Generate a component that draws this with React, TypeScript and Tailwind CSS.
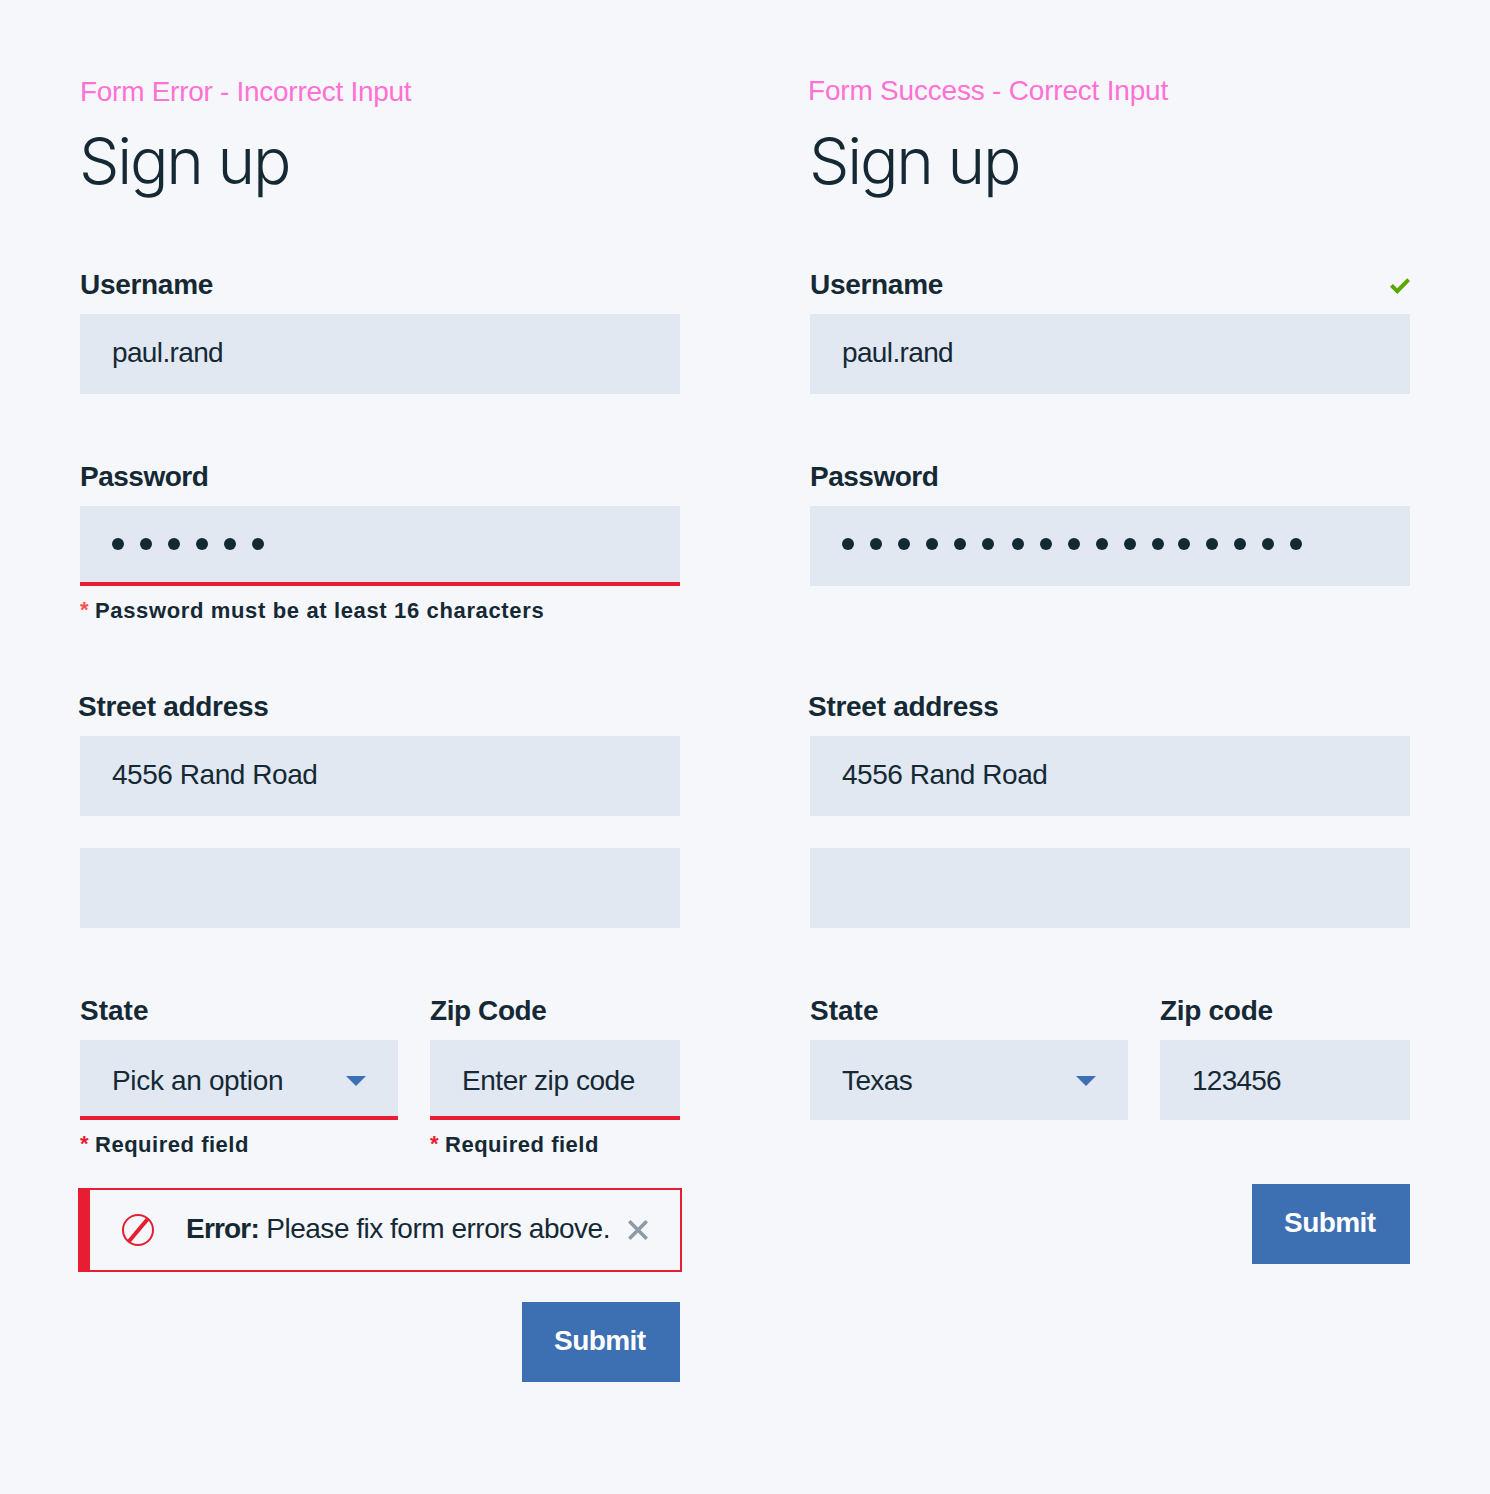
import type { ReactNode } from 'react';

function Label({ children, className = '' }: { children: ReactNode; className?: string }) {
  return <div className={`mb-2.5 flex h-10 items-center pt-0.5 whitespace-nowrap text-[28px] leading-10 font-bold ${className}`}>{children}</div>;
}

function Field({ children, error = false, className = '' }: { children?: ReactNode; error?: boolean; className?: string }) {
  return (
    <div className={`flex h-20 items-center whitespace-nowrap bg-[#e1e8f2] px-8 text-[28px] leading-10 ${error ? 'shadow-[inset_0_-4px_0_#e71d32]' : ''} ${className}`}>
      {children}
    </div>
  );
}

function Helper({ children, star, className }: { children: ReactNode; star: string; className: string }) {
  return (
    <div className="mt-3 flex h-6 whitespace-nowrap text-[22px] leading-[26px] font-bold">
      <span className={`-mt-px w-[15px] ${star}`}>*</span>
      <span className={className}>{children}</span>
    </div>
  );
}

function Dots({ groups }: { groups: { count: number; gap: string }[] }) {
  return (
    <div className="flex items-center">
      {groups.map((g, i) => (
        <div key={i} className={`flex gap-4 ${g.gap}`}>
          {Array.from({ length: g.count }, (_, j) => (
            <span key={j} className="size-3 rounded-full bg-[#152935]" />
          ))}
        </div>
      ))}
    </div>
  );
}

function Caret() {
  return (
    <svg className="ml-auto h-2.5 w-5 shrink-0" viewBox="0 0 20 10" fill="#3d70b2">
      <path d="M0 0h20L10 10z" />
    </svg>
  );
}

function Submit() {
  return (
    <button className="flex h-20 w-[158px] items-center bg-[#3d70b2] px-8 pb-0.5 text-[28px] leading-10 font-bold tracking-[-0.55px] text-white">
      Submit
    </button>
  );
}

function Heading() {
  return (
    <h1 className="mt-[9px] -ml-px flex h-20 items-center whitespace-nowrap font-[Inter,sans-serif] text-[64px] leading-[80px] font-light tracking-[-2.2px]">
      Sign up
    </h1>
  );
}

function Address() {
  return (
    <>
      <Label className="-ml-0.5 tracking-[-0.28px]">Street address</Label>
      <Field className="pb-0.5 tracking-[-0.45px]">4556 Rand Road</Field>
      <Field className="mt-8" />
    </>
  );
}

function ErrorBanner() {
  return (
    <div className="-mx-0.5 mt-8 flex h-[84px] items-center border-2 border-l-[12px] border-[#e71d32] pr-8 pl-8 whitespace-nowrap text-[28px] leading-10">
      <svg className="size-8 shrink-0" viewBox="0 0 32 32" fill="none" stroke="#e71d32">
        <circle cx="16" cy="16" r="15" strokeWidth="2" />
        <path d="M7 27.2 25.7 5" strokeWidth="4" />
      </svg>
      <p className="ml-8 pb-0.5 tracking-[-0.49px]">
        <b className="tracking-[-0.8px]">Error:</b> Please fix form errors above.
      </p>
      <svg className="ml-auto size-5 shrink-0" viewBox="0 0 20 20" stroke="#8c9ba5" strokeWidth="3.6">
        <path d="M1.3 1.3l17.4 17.4M18.7 1.3 1.3 18.7" />
      </svg>
    </div>
  );
}

export default function App() {
  return (
    <main className="flex h-[1494px] w-[1490px] gap-[130px] bg-[#f5f7fb] px-20 font-['Liberation_Sans',Arial,sans-serif] text-[#152935]">
      <section className="w-[600px] shrink-0 pt-[72px]">
        <p className="h-10 whitespace-nowrap text-[28px] leading-10 tracking-[-0.28px] text-[#ff71d4]">Form Error - Incorrect Input</p>
        <Heading />
        <div className="mt-[63px]">
          <Label className="tracking-[-0.3px]">Username</Label>
          <Field className="pb-0.5 tracking-[-0.64px]">paul.rand</Field>
        </div>
        <div className="mt-[62px]">
          <Label className="tracking-[-0.5px]">Password</Label>
          <Field error className="pb-1">
            <Dots groups={[{ count: 6, gap: '' }]} />
          </Field>
          <Helper star="text-[#ff5050]" className="tracking-[0.64px]">Password must be at least 16 characters</Helper>
        </div>
        <div className="mt-16">
          <Address />
        </div>
        <div className="mt-[62px] flex gap-8">
          <div className="w-[318px]">
            <Label>State</Label>
            <Field error className="pt-0.5 tracking-[-0.34px]">Pick an option<Caret /></Field>
            <Helper star="text-[#e71d32]" className="tracking-[0.52px]">Required field</Helper>
          </div>
          <div className="w-[250px]">
            <Label className="tracking-[-0.42px]">Zip Code</Label>
            <Field error className="pt-0.5 tracking-[-0.44px]">Enter zip code</Field>
            <Helper star="text-[#e71d32]" className="tracking-[0.52px]">Required field</Helper>
          </div>
        </div>
        <ErrorBanner />
        <div className="mt-[30px] flex justify-end">
          <Submit />
        </div>
      </section>

      <section className="w-[600px] shrink-0 pt-[71px]">
        <p className="-ml-0.5 h-[41px] whitespace-nowrap text-[28px] leading-10 tracking-[-0.2px] text-[#ff71d4]">Form Success - Correct Input</p>
        <Heading />
        <div className="mt-[63px]">
          <Label className="justify-between tracking-[-0.3px]">
            Username
            <svg className="mt-0.5 h-4 w-5" viewBox="0 0 20 16" fill="none" stroke="#5aa700" strokeWidth="4">
              <path d="M1.4 7.4 7.3 13.2 18.6 1.6" />
            </svg>
          </Label>
          <Field className="pb-0.5 tracking-[-0.64px]">paul.rand</Field>
        </div>
        <div className="mt-[62px]">
          <Label className="tracking-[-0.5px]">Password</Label>
          <Field className="pb-1">
            <Dots groups={[{ count: 6, gap: '' }, { count: 6, gap: 'ml-[18px]' }, { count: 5, gap: 'ml-3.5' }]} />
          </Field>
        </div>
        <div className="mt-[100px]">
          <Address />
        </div>
        <div className="mt-[62px] flex gap-8">
          <div className="w-[318px]">
            <Label>State</Label>
            <Field className="pt-0.5 tracking-[-0.6px]">Texas<Caret /></Field>
          </div>
          <div className="w-[250px]">
            <Label className="tracking-[-0.3px]">Zip code</Label>
            <Field className="pt-0.5 tracking-[-0.75px]">123456</Field>
          </div>
        </div>
        <div className="mt-16 flex justify-end">
          <Submit />
        </div>
      </section>
    </main>
  );
}
